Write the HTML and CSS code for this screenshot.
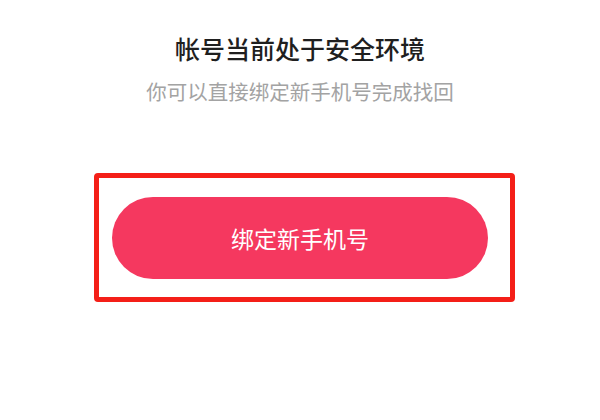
FILE: index.html
```html
<!DOCTYPE html>
<html lang="zh-CN">
<head>
<meta charset="utf-8">
<title>帐号当前处于安全环境</title>
<link rel="stylesheet" href="styles.css">
</head>
<body>
<main class="page">
  <h1 class="title">帐号当前处于安全环境</h1>
  <p class="subtitle">你可以直接绑定新手机号完成找回</p>
  <div class="highlight">
    <button class="bind-btn" type="button">绑定新手机号</button>
  </div>
</main>
</body>
</html>
```

FILE: styles.css
```css
html, body {
  margin: 0;
  padding: 0;
  background: #ffffff;
}

body {
  width: 600px;
  height: 420px;
  overflow: hidden;
  font-family: "Noto Sans CJK SC", "Noto Sans", sans-serif;
}

.page {
  display: flex;
  flex-direction: column;
  align-items: center;
  padding-top: 33px;
}

.title {
  margin: 0;
  font-size: 25px;
  line-height: 30px;
  font-weight: 500;
  color: #1f1f1f;
}

.subtitle {
  margin: 14px 0 0;
  font-size: 20.5px;
  line-height: 28px;
  font-weight: 400;
  color: #a3a3a3;
}

.highlight {
  align-self: flex-start;
  margin: 68px 0 0 94px;
  width: 398px;
  height: 100px;
  border: 5px solid #f41f18;
  border-radius: 4px;
  padding: 19px 0 0 13px;
  box-sizing: content-box;
}

.bind-btn {
  display: flex;
  align-items: center;
  justify-content: center;
  width: 376px;
  height: 82px;
  border: none;
  border-radius: 41px;
  background: #f5385f;
  color: #ffffff;
  font-family: "Noto Sans CJK SC", "Noto Sans", sans-serif;
  font-size: 23px;
  font-weight: 400;
  padding: 0;
}
```
